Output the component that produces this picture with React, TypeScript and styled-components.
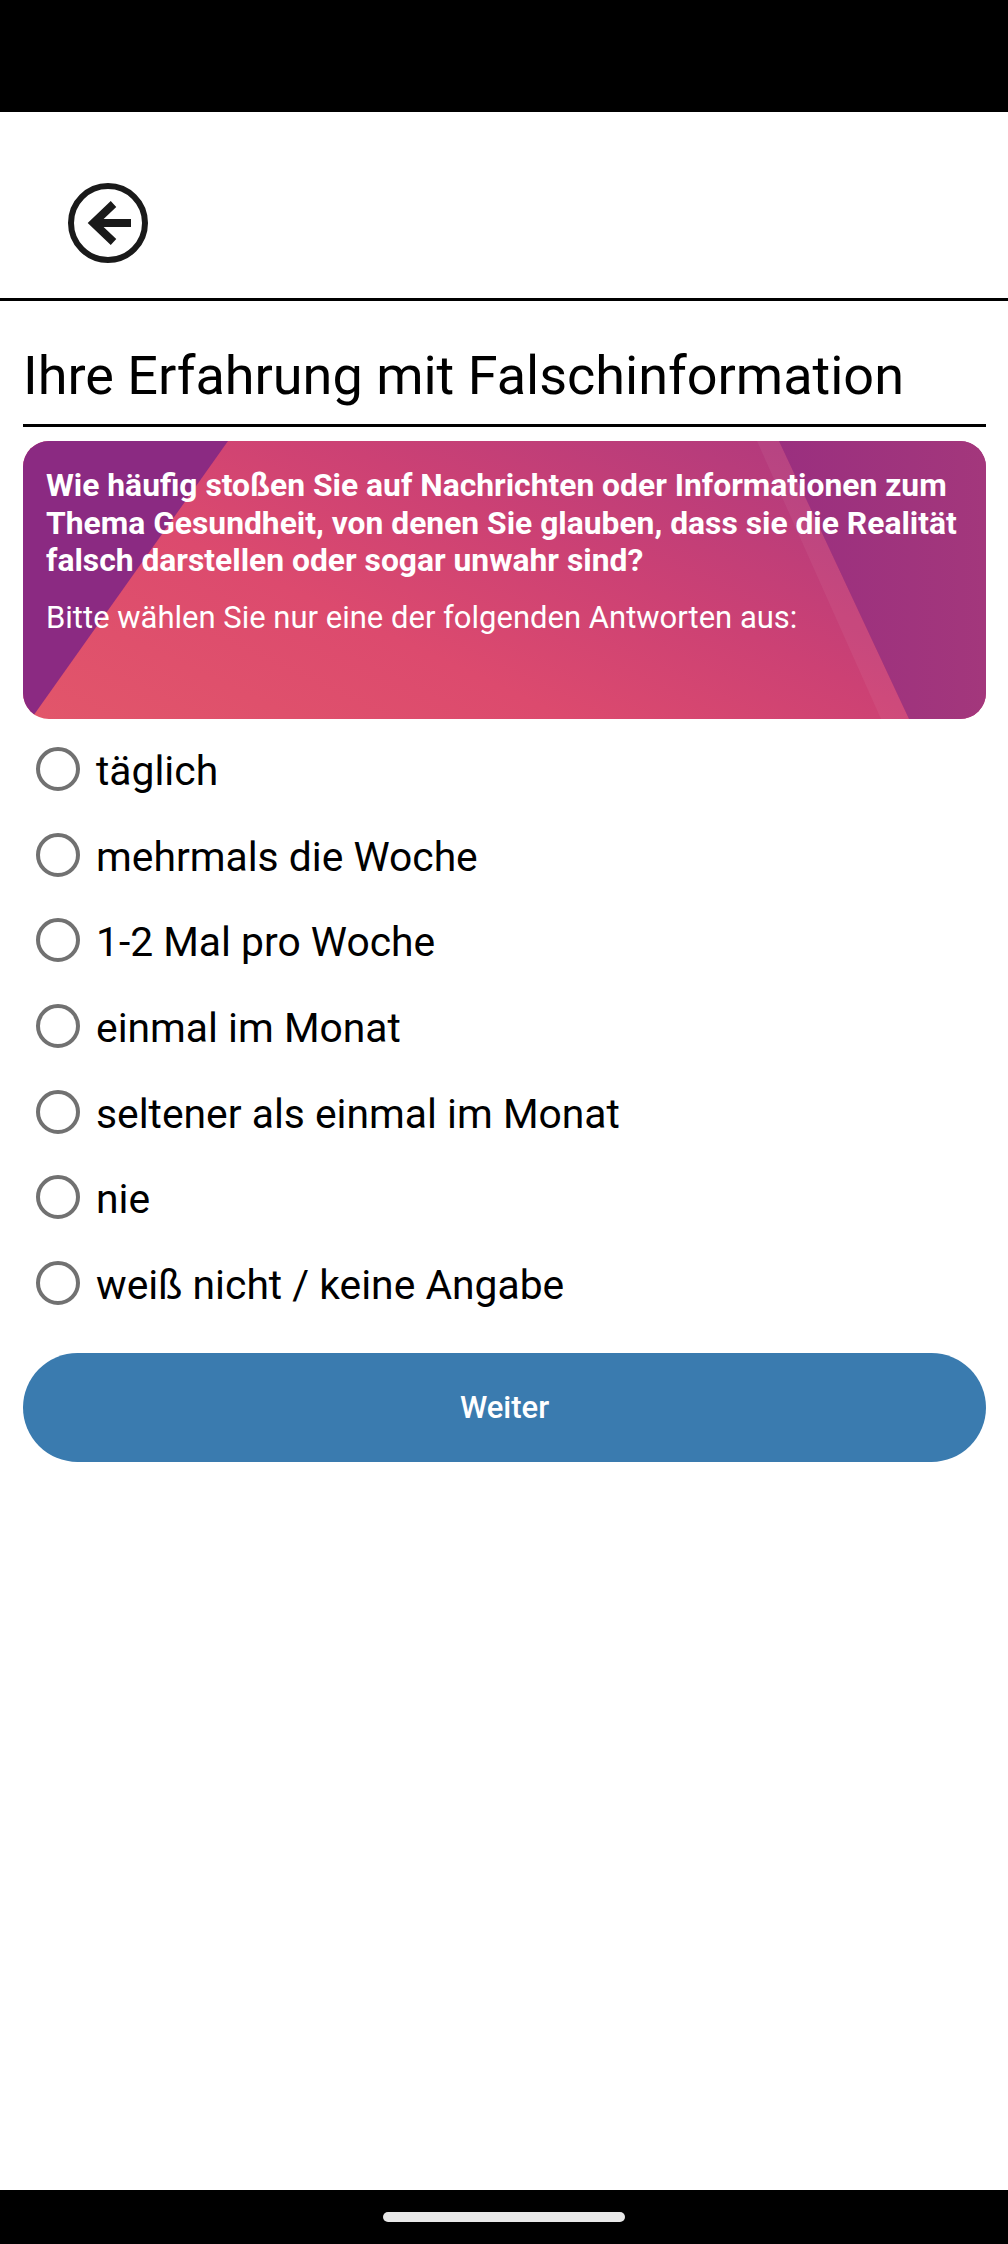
import React from "react";
import styled, { createGlobalStyle } from "styled-components";

const GlobalStyle = createGlobalStyle`
  html, body { margin: 0; padding: 0; background: #ffffff; }
  body { font-family: Roboto, "Noto Sans", "Liberation Sans", sans-serif; color: #000; }
  * { box-sizing: border-box; }
`;

const Screen = styled.div`
  min-height: 100vh;
  display: flex;
  flex-direction: column;
  background: #ffffff;
`;

const StatusBar = styled.div`
  height: 112px;
  background: #000000;
  flex: none;
`;

const Header = styled.header`
  height: 189px;
  flex: none;
  display: flex;
  align-items: flex-start;
  padding: 70px 0 0 67px;
  border-bottom: 3px solid #000000;
`;

const BackButton = styled.button`
  width: 82px;
  height: 82px;
  padding: 0;
  border: none;
  background: transparent;
  display: flex;
  cursor: pointer;
`;

const Content = styled.main`
  flex: 1;
  display: flex;
  flex-direction: column;
  padding: 0 22px 0 23px;
`;

const Title = styled.h1`
  margin: 43px 0 0;
  padding: 0 0 16px;
  font-family: Roboto, "Liberation Sans", sans-serif;
  font-weight: 400;
  font-size: 54px;
  line-height: 64px;
  color: #000000;
  border-bottom: 3px solid #000000;
  white-space: nowrap;
`;

const QuestionCard = styled.section`
  position: relative;
  overflow: hidden;
  margin-top: 14px;
  height: 278px;
  border-radius: 26px;
  padding: 26px 16px 0 23px;
  background: linear-gradient(25deg, #e2566a 0%, #dc4a6e 35%, #cc4174 58%, #b83c7b 80%, #a9357f 100%);
  color: #ffffff;

  &::before {
    content: "";
    position: absolute;
    inset: 0;
    background: #8b2a82;
    clip-path: polygon(0 0, 205px 0, 8px 100%, 0 100%);
  }

  &::after {
    content: "";
    position: absolute;
    inset: 0;
    background: linear-gradient(90deg, #922a80 0%, #972c80 70%, #a3377c 100%);
    clip-path: polygon(756px 0, 100% 0, 100% 100%, 886px 100%);
  }
`;

const CardStreak = styled.div`
  position: absolute;
  inset: 0;
  background: rgba(255, 255, 255, 0.05);
  clip-path: polygon(734px 0, 756px 0, 886px 100%, 858px 100%);
`;

const CardBody = styled.div`
  position: relative;
  z-index: 1;
  display: flex;
  flex-direction: column;
  gap: 19px;
`;

const QuestionText = styled.p`
  margin: 0;
  font-family: Roboto, "Liberation Sans", sans-serif;
  font-weight: 700;
  font-size: 31.8px;
  line-height: 37.5px;
`;

const HintText = styled.p`
  margin: 0;
  font-family: Roboto, "Liberation Sans", sans-serif;
  font-weight: 400;
  font-size: 31px;
  line-height: 37.5px;
`;

const OptionList = styled.div`
  display: flex;
  flex-direction: column;
  margin-top: 7px;
`;

const OptionRow = styled.label`
  height: 85.7px;
  display: flex;
  align-items: center;
  gap: 16px;
  padding-left: 13px;
  cursor: pointer;
`;

const RadioCircle = styled.span<{ $checked?: boolean }>`
  width: 44px;
  height: 44px;
  flex: none;
  border-radius: 50%;
  border: 4px solid ${(p) => (p.$checked ? "#3a7baf" : "#717171")};
  background: #ffffff;
`;

const OptionLabel = styled.span`
  font-family: Roboto, "Liberation Sans", sans-serif;
  font-size: 40.8px;
  font-weight: 400;
  color: #000000;
  padding-top: 4px;
  white-space: nowrap;
`;

const NextButton = styled.button`
  margin-top: 27px;
  height: 109px;
  width: 100%;
  border: none;
  border-radius: 55px;
  background: #3a7baf;
  color: #ffffff;
  font-family: Roboto, "Liberation Sans", sans-serif;
  font-weight: 500;
  font-size: 31px;
  cursor: pointer;
`;

const NavBar = styled.div`
  height: 54px;
  flex: none;
  background: #000000;
  display: flex;
  justify-content: center;
  align-items: flex-start;
  padding-top: 22px;
`;

const HomePill = styled.div`
  width: 242px;
  height: 10px;
  border-radius: 5px;
  background: #e8e8e8;
`;

const BackIcon = () => (
  <svg width="82" height="82" viewBox="0 0 82 82" fill="none">
    <circle cx="41" cy="41" r="37" stroke="#1a1a1a" strokeWidth="6" />
    <path d="M26 41H64" stroke="#1a1a1a" strokeWidth="8" />
    <path d="M46.5 22L26.5 41L46.5 60" stroke="#1a1a1a" strokeWidth="8" strokeLinejoin="miter" />
  </svg>
);

const options = [
  "täglich",
  "mehrmals die Woche",
  "1-2 Mal pro Woche",
  "einmal im Monat",
  "seltener als einmal im Monat",
  "nie",
  "weiß nicht / keine Angabe",
];

export default function App() {
  const [selected, setSelected] = React.useState<number | null>(null);
  return (
    <>
      <GlobalStyle />
      <Screen>
        <StatusBar />
        <Header>
          <BackButton aria-label="Zurück">
            <BackIcon />
          </BackButton>
        </Header>
        <Content>
          <Title>Ihre Erfahrung mit Falschinformation</Title>
          <QuestionCard>
            <CardStreak />
            <CardBody>
              <QuestionText>
                Wie häufig stoßen Sie auf Nachrichten oder Informationen zum Thema Gesundheit, von denen Sie
                glauben, dass sie die Realität falsch darstellen oder sogar unwahr sind?
              </QuestionText>
              <HintText>Bitte wählen Sie nur eine der folgenden Antworten aus:</HintText>
            </CardBody>
          </QuestionCard>
          <OptionList>
            {options.map((o, i) => (
              <OptionRow key={o} onClick={() => setSelected(i)}>
                <RadioCircle $checked={selected === i} />
                <OptionLabel>{o}</OptionLabel>
              </OptionRow>
            ))}
          </OptionList>
          <NextButton>Weiter</NextButton>
        </Content>
        <NavBar>
          <HomePill />
        </NavBar>
      </Screen>
    </>
  );
}
